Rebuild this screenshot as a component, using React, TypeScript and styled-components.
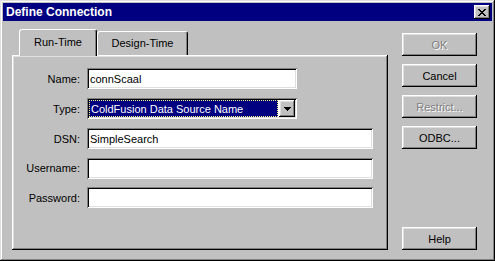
import { Fragment } from "react";
import styled, { createGlobalStyle, css } from "styled-components";

const GlobalStyle = createGlobalStyle`
  html, body {
    margin: 0;
    padding: 0;
    background: #c0c0c0;
  }
  body {
    font-family: "Liberation Sans", Arial, sans-serif;
    font-size: 11px;
    color: #000;
  }
`;

const raised = css`
  box-shadow: inset -1px -1px #000, inset 1px 1px #fff, inset -2px -2px #808080,
    inset 2px 2px #dfdfdf;
`;

const sunken = css`
  box-shadow: inset 1px 1px #808080, inset -1px -1px #fff, inset 2px 2px #000,
    inset -2px -2px #dfdfdf;
`;

const Window = styled.div`
  width: 495px;
  height: 261px;
  box-sizing: border-box;
  padding: 3px;
  background: #c0c0c0;
  box-shadow: inset -1px -1px #000, inset 1px 1px #dfdfdf, inset -2px -2px #808080,
    inset 2px 2px #fff;
  display: flex;
  flex-direction: column;
`;

const TitleBar = styled.div`
  height: 18px;
  flex: none;
  background: #000080;
  color: #fff;
  display: flex;
  align-items: center;
  justify-content: space-between;
  padding: 0 2px 0 3px;
  font-size: 12px;
  font-weight: bold;
`;

const CloseButton = styled.div`
  width: 16px;
  height: 14px;
  background: #c0c0c0;
  ${raised};
  display: flex;
  align-items: center;
  justify-content: center;
  padding-right: 1px;
  box-sizing: border-box;
`;

const Body = styled.div`
  flex: 1;
  display: flex;
  gap: 14px;
  padding: 8px 15px 8px 9px;
`;

const LeftCol = styled.div`
  width: 376px;
  display: flex;
  flex-direction: column;
`;

const TabRow = styled.div`
  height: 26px;
  flex: none;
  display: flex;
  align-items: flex-end;
  padding-left: 7px;
`;

const Tab = styled.div<{ $active?: boolean; $width: number }>`
  width: ${(p) => p.$width}px;
  height: ${(p) => (p.$active ? 27 : 24)}px;
  box-sizing: border-box;
  border-top: 1px solid #fff;
  border-left: 1px solid #fff;
  border-right: 1px solid #000;
  border-radius: 3px 3px 0 0;
  box-shadow: inset -1px 0 #808080;
  background: #c0c0c0;
  display: flex;
  align-items: center;
  justify-content: center;
  padding-bottom: ${(p) => (p.$active ? 2 : 1)}px;
  ${(p) =>
    p.$active &&
    css`
      position: relative;
      z-index: 1;
      margin-bottom: -1px;
    `}
`;

const Panel = styled.div`
  flex: 1;
  box-sizing: border-box;
  ${raised};
  padding: 13px 0 0 2px;
  display: grid;
  grid-template-columns: 66px auto;
  grid-template-rows: 21px 21px 21px 20px 21px;
  column-gap: 7px;
  row-gap: 9px;
  align-content: start;
`;

const Label = styled.label`
  text-align: right;
  align-self: center;
  white-space: nowrap;
`;

const TextField = styled.input<{ $width: number }>`
  width: ${(p) => p.$width}px;
  height: 21px;
  box-sizing: border-box;
  border: 0;
  outline: none;
  background: #fff;
  ${sunken};
  padding: 2px 3px 1px;
  font-family: "Liberation Sans", Arial, sans-serif;
  font-size: 11px;
  color: #000;
`;

const SelectBox = styled.div<{ $width: number }>`
  width: ${(p) => p.$width}px;
  height: 21px;
  box-sizing: border-box;
  background: #fff;
  ${sunken};
  padding: 2px;
  display: flex;
`;

const SelectValue = styled.div`
  flex: 1;
  margin-right: 1px;
  background: #000080;
  color: #fff;
  border: 1px dotted #ffff80;
  display: flex;
  align-items: center;
  padding-left: 1px;
  white-space: nowrap;
  overflow: hidden;
`;

const DropButton = styled.div`
  width: 16px;
  height: 17px;
  box-sizing: border-box;
  background: #c0c0c0;
  ${raised};
  display: flex;
  align-items: center;
  justify-content: center;
`;

const RightCol = styled.div`
  width: 75px;
  display: flex;
  flex-direction: column;
  gap: 8px;
  padding-top: 4px;
`;

const Button = styled.div<{ $disabled?: boolean; $bottom?: boolean }>`
  height: 23px;
  flex: none;
  box-sizing: border-box;
  background: #c0c0c0;
  ${raised};
  display: flex;
  align-items: center;
  justify-content: center;
  color: ${(p) => (p.$disabled ? "#808080" : "#000")};
  text-shadow: ${(p) => (p.$disabled ? "1px 1px #fff" : "none")};
  margin-top: ${(p) => (p.$bottom ? "auto" : "0")};
`;

const CloseIcon = () => (
  <svg width="8" height="7" viewBox="0 0 8 7" shapeRendering="crispEdges">
    <path
      fill="#000"
      d="M0 0h2v1H0zM6 0h2v1H6zM1 1h2v1H1zM5 1h2v1H5zM2 2h4v1H2zM3 3h2v1H3zM2 4h4v1H2zM1 5h2v1H1zM5 5h2v1H5zM0 6h2v1H0zM6 6h2v1H6z"
    />
  </svg>
);

const ArrowIcon = () => (
  <svg width="7" height="4" viewBox="0 0 7 4" shapeRendering="crispEdges">
    <path fill="#000" d="M0 0h7v1H0zM1 1h5v1H1zM2 2h3v1H2zM3 3h1v1H3z" />
  </svg>
);

const fields = [
  { label: "DSN:", value: "SimpleSearch" },
  { label: "Username:", value: "" },
  { label: "Password:", value: "" },
];

const App = () => {
  return (
    <>
      <GlobalStyle />
      <Window>
        <TitleBar>
          <span>Define Connection</span>
          <CloseButton>
            <CloseIcon />
          </CloseButton>
        </TitleBar>
        <Body>
          <LeftCol>
            <TabRow>
              <Tab $active $width={78}>
                Run-Time
              </Tab>
              <Tab $width={91}>Design-Time</Tab>
            </TabRow>
            <Panel>
              <Label>Name:</Label>
              <TextField $width={210} defaultValue="connScaal" />
              <Label>Type:</Label>
              <SelectBox $width={210}>
                <SelectValue>ColdFusion Data Source Name</SelectValue>
                <DropButton>
                  <ArrowIcon />
                </DropButton>
              </SelectBox>
              {fields.map((f) => (
                <Fragment key={f.label}>
                  <Label>{f.label}</Label>
                  <TextField
                    $width={286}
                    defaultValue={f.value}
                    type={f.label === "Password:" ? "password" : "text"}
                  />
                </Fragment>
              ))}
            </Panel>
          </LeftCol>
          <RightCol>
            <Button $disabled>OK</Button>
            <Button>Cancel</Button>
            <Button $disabled>Restrict...</Button>
            <Button>ODBC...</Button>
            <Button $bottom>Help</Button>
          </RightCol>
        </Body>
      </Window>
    </>
  );
};

export default App;
